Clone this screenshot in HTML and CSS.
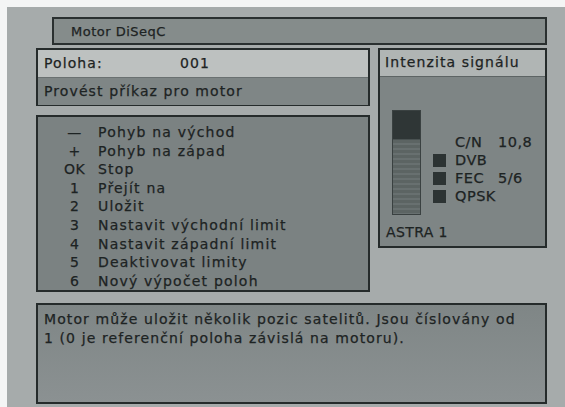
FILE: index.html
```html
<!DOCTYPE html>
<html lang="cs">
<head>
<meta charset="utf-8">
<title>Motor DiSeqC</title>
<link rel="stylesheet" href="styles.css">
</head>
<body>
<div class="screen">
  <div class="title">Motor DiSeqC</div>
  <div class="main">
    <div class="leftcol">
      <div class="panel pos">
        <div class="pos-row light"><span class="lbl">Poloha:</span><span class="val">001</span></div>
        <div class="pos-row">Provést příkaz pro motor</div>
      </div>
      <div class="panel list">
        <div class="item"><span class="key">—</span><span>Pohyb na východ</span></div>
        <div class="item"><span class="key">+</span><span>Pohyb na západ</span></div>
        <div class="item"><span class="key">OK</span><span>Stop</span></div>
        <div class="item"><span class="key">1</span><span>Přejít na</span></div>
        <div class="item"><span class="key">2</span><span>Uložit</span></div>
        <div class="item"><span class="key">3</span><span>Nastavit východní limit</span></div>
        <div class="item"><span class="key">4</span><span>Nastavit západní limit</span></div>
        <div class="item"><span class="key">5</span><span>Deaktivovat limity</span></div>
        <div class="item"><span class="key">6</span><span>Nový výpočet poloh</span></div>
      </div>
    </div>
    <div class="panel signal">
      <div class="sig-head">Intenzita signálu</div>
      <div class="sig-body">
        <div class="bar"><div class="bar-top"></div><div class="bar-bottom"></div></div>
        <div class="info">
          <div class="irow"><span class="sq none"></span><span class="ilbl">C/N</span><span class="ival">10,8</span></div>
          <div class="irow"><span class="sq"></span><span class="ilbl">DVB</span></div>
          <div class="irow"><span class="sq"></span><span class="ilbl">FEC</span><span class="ival">5/6</span></div>
          <div class="irow"><span class="sq"></span><span class="ilbl">QPSK</span></div>
        </div>
      </div>
      <div class="sat">ASTRA 1</div>
    </div>
  </div>
  <div class="panel help">Motor může uložit několik pozic satelitů. Jsou číslovány od<br>1 (0 je referenční poloha závislá na motoru).</div>
</div>
</body>
</html>
```
FILE: styles.css
```css
html, body {
  margin: 0;
  padding: 0;
  background: #f4f5f5;
}
body {
  width: 565px;
  height: 407px;
  overflow: hidden;
  font-family: "DejaVu Sans", Verdana, sans-serif;
  font-size: 14px;
  color: #1d2323;
  -webkit-text-stroke: 0.25px #1d2323;
}
.screen {
  margin: 7px 0 0 7px;
  height: 400px;
  background: #a6abab;
  padding: 10px 18px 0 29px;
  box-sizing: border-box;
  display: flex;
  flex-direction: column;
}
.title {
  margin-left: 16px;
  height: 28px;
  box-sizing: border-box;
  border: 2px solid #2a3030;
  background: #858c8b;
  padding-left: 17px;
  line-height: 25px;
  font-size: 13px;
  letter-spacing: 0.5px;
}
.main {
  display: flex;
  gap: 8px;
  margin-top: 3px;
}
.leftcol {
  width: 334px;
  display: flex;
  flex-direction: column;
  gap: 9px;
}
.panel {
  border: 2px solid #252b2b;
  box-sizing: border-box;
  background: #7b8282;
}
.pos {
  height: 58px;
  display: flex;
  flex-direction: column;
}
.pos-row {
  flex: 1;
  padding-left: 6px;
  line-height: 27px;
  background: #7f8686;
  letter-spacing: 1.1px;
}
.pos-row.light {
  background: #bdc1c0;
  border-bottom: 1px solid #6a7171;
  display: flex;
}
.lbl { width: 136px; }
.list {
  height: 177px;
  padding-top: 6px;
}
.item {
  display: flex;
  height: 18.6px;
  line-height: 18.6px;
  letter-spacing: 1.2px;
}
.key {
  width: 58px;
  padding-left: 15px;
  box-sizing: border-box;
  text-align: center;
  margin-right: 2px;
  letter-spacing: 0.3px;
}
.signal {
  width: 169px;
  height: 200px;
  background: #7e8585;
  display: flex;
  flex-direction: column;
}
.sig-head {
  height: 26px;
  line-height: 24px;
  background: #b0b5b4;
  border-bottom: 1px solid #5d6464;
  padding-left: 5px;
  letter-spacing: 1.1px;
}
.sig-body {
  display: flex;
  padding: 33px 0 0 12px;
}
.bar {
  width: 29px;
  height: 105px;
  box-sizing: border-box;
  border: 1px solid #3a4141;
  display: flex;
  flex-direction: column;
}
.bar-top {
  height: 28px;
  background: #2f3636;
}
.bar-bottom {
  flex: 1;
  background: repeating-linear-gradient(#5c6463 0px, #5c6463 3px, #687070 3px, #687070 5px);
  border-top: 1px solid #4a5252;
}
.info {
  margin-left: 12px;
  margin-top: 23px;
  display: flex;
  flex-direction: column;
}
.irow {
  display: flex;
  align-items: center;
  height: 18px;
  font-size: 14.5px;
  letter-spacing: 0.5px;
}
.sq {
  width: 13px;
  height: 13px;
  background: #2c3333;
  margin-right: 9px;
}
.sq.none { background: transparent; }
.ilbl { width: 43px; }
.sat {
  margin-top: 9px;
  padding-left: 6px;
  font-size: 14px;
  letter-spacing: 0.4px;
}
.help {
  margin-top: 11px;
  height: 101px;
  background: linear-gradient(#7f8686, #8b9192);
  padding: 5px 6px;
  line-height: 19px;
  letter-spacing: 1.1px;
}
```
